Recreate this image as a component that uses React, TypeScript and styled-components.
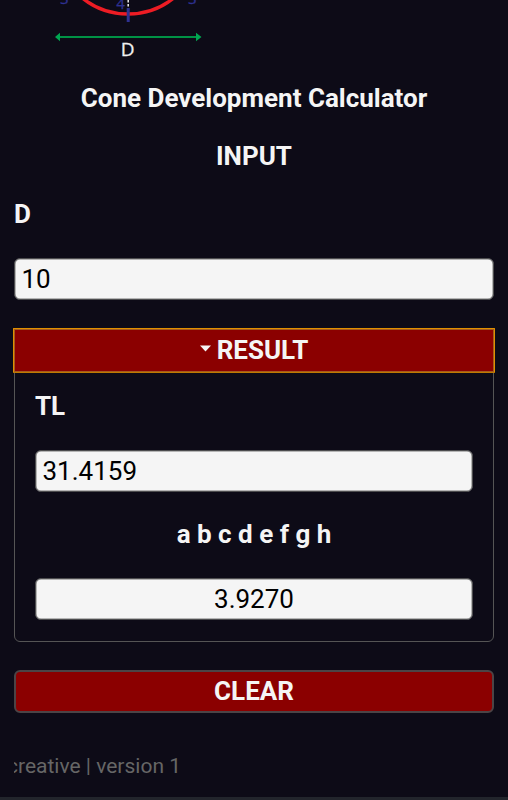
import React, { useState } from "react";
import styled, { createGlobalStyle } from "styled-components";

const GlobalStyle = createGlobalStyle`
  * { box-sizing: border-box; }
  body {
    margin: 0;
    background: #0d0b17;
    color: whitesmoke;
    font-family: Roboto, sans-serif;
    overflow: hidden;
  }
`;

const Page = styled.main`
  display: flex;
  flex-direction: column;
  height: 800px;
  overflow: hidden;
`;

const Diagram = styled.svg`
  display: block;
  flex: none;
  width: 508px;
  height: 70px;
`;

const Content = styled.div`
  display: flex;
  flex-direction: column;
  padding: 13px 14px 0;
`;

const Heading = styled.h1<{ $align?: "left" | "center"; $gap?: number }>`
  margin: 0 0 ${(p) => p.$gap ?? 28}px;
  height: 30px;
  font-size: 26px;
  line-height: 30px;
  font-weight: 700;
  white-space: nowrap;
  text-align: ${(p) => p.$align ?? "center"};
`;

const Field = styled.input<{ $centered?: boolean }>`
  display: block;
  width: 100%;
  height: 42px;
  margin: 0;
  padding: 0 6.5px 1px;
  border: 1px solid #4c4c4e;
  border-radius: 6px;
  outline: none;
  background: whitesmoke;
  box-shadow: inset 0 0 0 0.5px #777;
  color: #000;
  font: 400 26px Roboto, sans-serif;
  text-align: ${(p) => (p.$centered ? "center" : "left")};
`;

const ResultPanel = styled.section`
  margin-top: 29px;
  height: 313px;
  border: 1px solid #555;
  border-radius: 6px;
`;

const ResultHeader = styled.button`
  display: flex;
  align-items: center;
  justify-content: center;
  gap: 6px;
  width: calc(100% + 4px);
  height: 45px;
  margin: -2px -2px 0;
  padding: 0 0 2px;
  border: 1px solid #e09000;
  border-bottom-color: #c07a00;
  border-radius: 1px;
  background: #8b0000;
  box-shadow: inset 0 0 0 1px #a55a1c;
  color: whitesmoke;
  font: 700 26px Roboto, sans-serif;
`;

const Caret = styled.svg`
  width: 11px;
  height: 7px;
  margin-top: -2px;
`;

const ResultBody = styled.div`
  padding: 18px 20px 0;
`;

const BodyGap = styled.div`
  height: 27px;
`;

const ClearButton = styled.button`
  height: 43px;
  margin: 28px 0 0;
  padding: 0 0 2px;
  border: 2px solid #4c4446;
  border-radius: 6px;
  background: #8b0000;
  color: whitesmoke;
  font: 700 26px Roboto, sans-serif;
`;

const Ticker = styled.div`
  display: flex;
  justify-content: flex-end;
  width: 167px;
  height: 28px;
  margin-top: 39px;
  overflow: hidden;
  color: #666;
  font-size: 21px;
  line-height: 28px;
  white-space: nowrap;
`;

const BottomBar = styled.footer`
  flex: none;
  height: 3px;
  margin-top: auto;
  background: #22252c;
`;

function ConeDiagram() {
  return (
    <Diagram viewBox="0 0 508 70">
      <circle cx="128" cy="-59" r="73" fill="none" stroke="#ed1c24" strokeWidth="3.4" />
      <path d="M128.2 0V8" stroke="#eee" strokeWidth="1.5" strokeDasharray="2.5 1.5" />
      <path d="M128.2 8V22" stroke="#2e3192" strokeWidth="3" />
      <g fill="#2e3192" stroke="#2e3192" strokeWidth=".3" fontFamily="Open Sans, sans-serif" fontSize="15">
        <text x="60" y="3.5">3</text>
        <text x="116.3" y="8.7">4</text>
        <text x="188" y="3.5">3</text>
      </g>
      <path d="M59 37H198" stroke="#009245" strokeWidth="2.2" />
      <path d="M55 37L60 32.8V41.2ZM201.5 37L196 32.8V41.2Z" fill="#00a651" />
      <text x="127.7" y="56" textAnchor="middle" fill="#f0f0f0" stroke="#f0f0f0" strokeWidth=".3" fontFamily="Open Sans, sans-serif" fontSize="19">D</text>
    </Diagram>
  );
}

export default function App() {
  const [diameter, setDiameter] = useState("10");
  const [open, setOpen] = useState(true);
  const length = Number(diameter) * Math.PI;
  const show = (n: number) => (diameter ? n.toFixed(4) : "");

  return (
    <Page>
      <GlobalStyle />
      <ConeDiagram />
      <Content>
        <Heading>Cone Development Calculator</Heading>
        <Heading as="h2">INPUT</Heading>
        <Heading as="h3" $align="left" $gap={29}>D</Heading>
        <Field aria-label="D" value={diameter} onChange={(e) => setDiameter(e.target.value)} />
        <ResultPanel>
          <ResultHeader onClick={() => setOpen(!open)}>
            <Caret viewBox="0 0 11 7"><path d="M0 .5H11L5.5 6.5Z" fill="whitesmoke" /></Caret>
            RESULT
          </ResultHeader>
          {open && (
            <ResultBody>
              <Heading as="h3" $align="left" $gap={29}>TL</Heading>
              <Field aria-label="TL" readOnly value={show(length)} />
              <BodyGap />
              <Heading as="h3" $gap={29}>a b c d e f g h</Heading>
              <Field aria-label="Segment length" $centered readOnly value={show(length / 8)} />
            </ResultBody>
          )}
        </ResultPanel>
        <ClearButton onClick={() => setDiameter("")}>CLEAR</ClearButton>
        <Ticker><span>creative | version 1</span></Ticker>
      </Content>
      <BottomBar />
    </Page>
  );
}
